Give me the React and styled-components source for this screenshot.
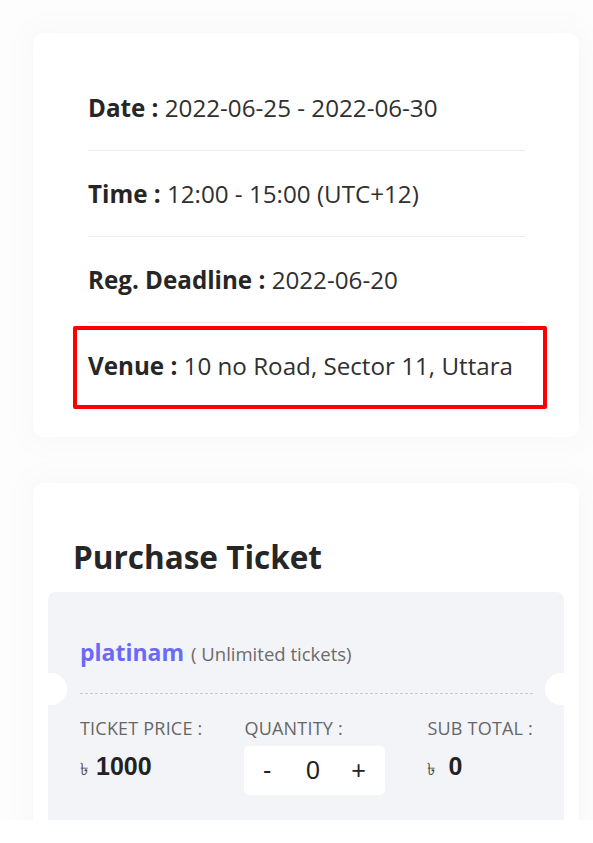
import React from "react";
import styled, { createGlobalStyle } from "styled-components";

const GlobalStyle = createGlobalStyle`
  html, body { margin: 0; padding: 0; background: #ffffff; }
  body { font-family: "Open Sans", "Noto Sans", sans-serif; color: #2b2b2b; }
  * { box-sizing: border-box; }
`;

const Page = styled.div`
  height: 820px;
  overflow: hidden;
  padding: 33px 14px 0 33px;
  display: flex;
  flex-direction: column;
  gap: 46px;
  background: #fdfdfd;
`;

const Card = styled.section`
  background: #ffffff;
  border-radius: 10px;
  box-shadow: 0 0 32px 8px rgba(0, 0, 0, 0.025);
`;

const InfoCard = styled(Card)`
  padding: 32px 54px 29px 55px;
`;

const InfoRow = styled.div`
  position: relative;
  padding: 25px 0;
  font-size: 24.2px;
  line-height: 35px;
  color: #303030;
  border-bottom: 1px solid #ececec;
  &:last-child { border-bottom: none; }
  ${(p) =>
    p.$highlight &&
    `
    &::after {
      content: "";
      position: absolute;
      left: -15px;
      right: -22px;
      top: 3px;
      bottom: -1px;
      border: 4px solid #ff0000;
      border-radius: 2px;
      pointer-events: none;
    }
  `}
`;

const Label = styled.strong`
  font-weight: 700;
  color: #262626;
`;

const TicketCard = styled(Card)`
  padding: 54px 15px 0 15px;
  flex: 1;
`;

const Title = styled.h2`
  margin: 0 0 15px 25px;
  font-size: 31.5px;
  line-height: 40px;
  font-weight: 700;
  color: #262626;
`;

const TicketBox = styled.div`
  position: relative;
  background: #f3f4f8;
  border-radius: 8px 8px 0 0;
  padding: 44px 31px 60px 32px;
`;

const Notch = styled.span`
  position: absolute;
  top: 81px;
  width: 32px;
  height: 32px;
  border-radius: 50%;
  background: #ffffff;
  ${(p) => (p.$side === "left" ? "left: -13px;" : "right: -13px;")}
`;

const TicketHead = styled.div`
  padding-bottom: 22px;
  border-bottom: 1px dashed #c9c9c9;
  line-height: 32px;
`;

const TicketName = styled.span`
  font-size: 23px;
  font-weight: 700;
  color: #6a6af6;
`;

const TicketNote = styled.span`
  margin-left: 7px;
  font-size: 18.5px;
  color: #6b6b6b;
`;

const Details = styled.div`
  display: flex;
  justify-content: space-between;
  padding-top: 22px;
`;

const Column = styled.div`
  display: flex;
  flex-direction: column;
  gap: 6px;
`;

const ColLabel = styled.div`
  font-size: 18px;
  line-height: 24px;
  font-weight: 500;
  color: #666666;
  text-transform: uppercase;
  letter-spacing: 0.2px;
`;

const Value = styled.div`
  padding-top: 4px;
  line-height: 32px;
  display: flex;
  align-items: baseline;
`;

const Currency = styled.span`
  font-family: "DejaVu Sans", "Noto Sans", sans-serif;
  font-size: 17px;
  color: #444;
  margin-right: ${(p) => p.$gap}px;
`;

const Amount = styled.span`
  font-family: "Liberation Sans", Arial, sans-serif;
  font-weight: 700;
  font-size: 25px;
  color: #222;
`;

const Quantity = styled.div`
  width: 141px;
  height: 49px;
  background: #ffffff;
  border-radius: 5px;
  display: grid;
  grid-template-columns: repeat(3, 1fr);
  align-items: center;
  padding: 0 4px 0 0;
  font-family: "Liberation Sans", Arial, sans-serif;
  font-size: 25px;
  color: #222;
`;

const QtyCell = styled.span`
  text-align: center;
`;

export default function App() {
  return (
    <>
      <GlobalStyle />
      <Page>
        <InfoCard>
          <InfoRow>
            <Label>Date :</Label> 2022-06-25 - 2022-06-30
          </InfoRow>
          <InfoRow>
            <Label>Time :</Label> 12:00 - 15:00 (UTC+12)
          </InfoRow>
          <InfoRow>
            <Label>Reg. Deadline :</Label> 2022-06-20
          </InfoRow>
          <InfoRow $highlight>
            <Label>Venue :</Label> 10 no Road, Sector 11, Uttara
          </InfoRow>
        </InfoCard>
        <TicketCard>
          <Title>Purchase Ticket</Title>
          <TicketBox>
            <Notch $side="left" />
            <Notch $side="right" />
            <TicketHead>
              <TicketName>platinam</TicketName>
              <TicketNote>( Unlimited tickets)</TicketNote>
            </TicketHead>
            <Details>
              <Column>
                <ColLabel>Ticket Price :</ColLabel>
                <Value>
                  <Currency $gap={8}>৳</Currency>
                  <Amount>1000</Amount>
                </Value>
              </Column>
              <Column>
                <ColLabel>Quantity :</ColLabel>
                <Quantity>
                  <QtyCell>-</QtyCell>
                  <QtyCell>0</QtyCell>
                  <QtyCell>+</QtyCell>
                </Quantity>
              </Column>
              <Column>
                <ColLabel>Sub Total :</ColLabel>
                <Value>
                  <Currency $gap={13}>৳</Currency>
                  <Amount>0</Amount>
                </Value>
              </Column>
            </Details>
          </TicketBox>
        </TicketCard>
      </Page>
    </>
  );
}
